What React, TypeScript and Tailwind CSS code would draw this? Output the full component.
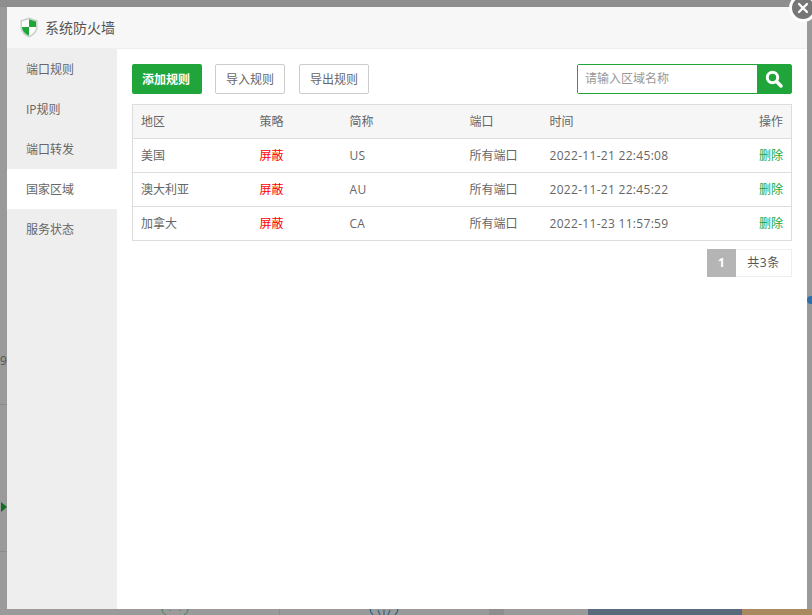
import { X } from 'lucide-react';

const MENU = ['端口规则', 'IP规则', '端口转发', '国家区域', '服务状态'];

const ROWS = [
  { area: '美国', code: 'US', time: '2022-11-21 22:45:08' },
  { area: '澳大利亚', code: 'AU', time: '2022-11-21 22:45:22' },
  { area: '加拿大', code: 'CA', time: '2022-11-23 11:57:59' },
];

function ShieldLogo() {
  return (
    <svg width="18" height="21" viewBox="0 0 18 21">
      <path d="M9 0.5 L17.5 3.2 V10 C17.5 15 13.5 18.6 9 20.5 C4.5 18.6 0.5 15 0.5 10 V3.2 Z" fill="#c9cfca" />
      <path d="M9 2.2 L16 4.4 V10 C16 14 12.8 17.2 9 18.8 C5.2 17.2 2 14 2 10 V4.4 Z" fill="#ffffff" />
      <path d="M9 2.2 L16 4.4 V10 H9 Z" fill="#20a53a" />
      <path d="M9 10 H2 C2 14 5.2 17.2 9 18.8 Z" fill="#20a53a" />
    </svg>
  );
}

export default function App() {
  return (
    <div
      className="relative h-[615px] w-[812px] overflow-hidden bg-[#9a9a9a] pl-[7px] pt-[7px] text-xs text-[#666]"
      style={{ fontFamily: '"Open Sans", "Noto Sans CJK SC", sans-serif' }}
    >
      {/* bits of the page behind the overlay */}
      <div className="absolute left-0 top-0 h-[7px] w-full bg-[#8e8e8e]" />
      <div className="absolute left-0 top-[404px] h-px w-[7px] bg-[#8c8c8c]" />
      <div className="absolute left-0 top-[551px] h-px w-[7px] bg-[#8c8c8c]" />
      <div className="absolute left-0 top-[353px] text-xs text-[#555]">9</div>
      <div className="absolute left-[1px] top-[502px] h-0 w-0 border-y-[5px] border-l-[6px] border-y-transparent border-l-[#0f6f1f]" />
      <div className="absolute bottom-0 left-[279px] h-[6px] w-px bg-[#8c8c8c]" />
      <div className="absolute bottom-0 left-[489px] h-[6px] w-[15px] bg-[#8e8e8e]" />
      <div className="absolute bottom-0 left-[588px] h-[6px] w-[224px] bg-[#586a7c]" />
      <div className="absolute right-0 bottom-0 h-[6px] w-[70px] bg-[#a98a60]" />
      <div className="absolute right-0 top-[296px] h-[8px] w-[5px] rounded-l-full bg-[#2f6ea8]" />
      <svg className="absolute bottom-0 left-[160px]" width="30" height="6" viewBox="0 0 30 6" fill="none" stroke="#3f7f52" strokeWidth="1">
        <path d="M2 0 C2 3 4 5 6 6 M28 0 C28 3 26 5 24 6 M10 1 V2 M20 1 V2" />
      </svg>
      <svg className="absolute bottom-0 left-[364px]" width="40" height="6" viewBox="0 0 40 6" fill="none" stroke="#2c6488" strokeWidth="1.2">
        <path d="M6 0 C6 3 8 5 9 6 M34 0 C34 3 32 5 31 6 M20 1 V6 M14 1 L16 6 M26 1 L24 6" />
      </svg>

      <div className="flex h-[602px] w-[800px] flex-col bg-white">
        <div className="flex h-[42px] shrink-0 items-center gap-[7px] border-b border-[#eee] bg-[#f7f7f7] pl-[13px] text-sm text-[#555]">
          <ShieldLogo />
          <span>系统防火墙</span>
        </div>

        <div className="flex min-h-0 flex-1">
          <div className="w-[110px] shrink-0 bg-[#eeeeee]">
            {MENU.map(m => (
              <div
                key={m}
                className={`flex h-10 items-center pl-[19px] pt-0.5 text-xs text-[#666] ${m === '国家区域' ? 'bg-white' : ''}`}
              >
                {m}
              </div>
            ))}
          </div>

          <div className="flex-1 pl-[15px] pr-[15px] pt-[15px]">
            <div className="flex h-[30px] items-center">
              <button className="h-[30px] w-[70px] rounded-[2px] bg-[#20a53a] pr-0.5 pt-0.5 text-xs font-bold text-white">添加规则</button>
              <button className="ml-[13px] h-[30px] w-[70px] rounded-[2px] border border-[#ccc] bg-white pt-0.5 text-xs text-[#666]">导入规则</button>
              <button className="ml-[14px] h-[30px] w-[70px] rounded-[2px] border border-[#ccc] bg-white pt-0.5 text-xs text-[#666]">导出规则</button>
              <div className="ml-auto flex h-[30px] w-[215px] rounded-[2px] border border-[#20a53a]">
                <input
                  className="min-w-0 flex-1 bg-white pl-[7px] text-xs outline-none placeholder:text-[#999]"
                  placeholder="请输入区域名称"
                />
                <div className="flex w-[34px] items-center justify-center bg-[#20a53a]">
                  <svg width="18" height="18" viewBox="0 0 18 18" fill="none" stroke="#fff">
                    <circle cx="7.5" cy="7.5" r="5.2" strokeWidth="3" />
                    <path d="M11.5 11.5 L16 16" strokeWidth="3.4" strokeLinecap="round" />
                  </svg>
                </div>
              </div>
            </div>

            <table className="mt-[10px] w-[660px] table-fixed border-collapse border border-[#ddd] text-xs">
              <colgroup>
                <col className="w-[119px]" />
                <col className="w-[90px]" />
                <col className="w-[120px]" />
                <col className="w-[80px]" />
                <col />
                <col className="w-[60px]" />
              </colgroup>
              <thead>
                <tr className="h-[34px] border-b border-[#ddd] bg-[#f6f6f6] text-left">
                  <th className="px-2 font-normal">地区</th>
                  <th className="px-2 font-normal">策略</th>
                  <th className="px-2 font-normal">简称</th>
                  <th className="px-2 font-normal">端口</th>
                  <th className="px-2 font-normal">时间</th>
                  <th className="px-2 text-right font-normal">操作</th>
                </tr>
              </thead>
              <tbody>
                {ROWS.map(r => (
                  <tr key={r.code} className="h-[34px] border-b border-[#ddd]">
                    <td className="px-2">{r.area}</td>
                    <td className="px-2 text-[#ff0000]">屏蔽</td>
                    <td className="px-2 tracking-[0.3px]">{r.code}</td>
                    <td className="px-2">所有端口</td>
                    <td className="px-2 tracking-[0.3px]">{r.time}</td>
                    <td className="px-2 text-right text-[#20a53a]">删除</td>
                  </tr>
                ))}
              </tbody>
            </table>

            <div className="mt-2 flex justify-end">
              <span className="flex h-7 w-[29px] items-center justify-center bg-[#b5b5b5] font-bold text-white">1</span>
              <span className="flex h-7 w-[56px] items-center justify-center border border-[#eee] border-l-0 bg-white tracking-[0.5px] text-[#555]">共3条</span>
            </div>
          </div>
        </div>
      </div>

      <div className="absolute right-[-5px] top-[-6px] flex h-[28px] w-[28px] items-center justify-center rounded-full border-[3px] border-white bg-[#777]">
        <X size={16} strokeWidth={3.4} color="#fff" />
      </div>
    </div>
  );
}
